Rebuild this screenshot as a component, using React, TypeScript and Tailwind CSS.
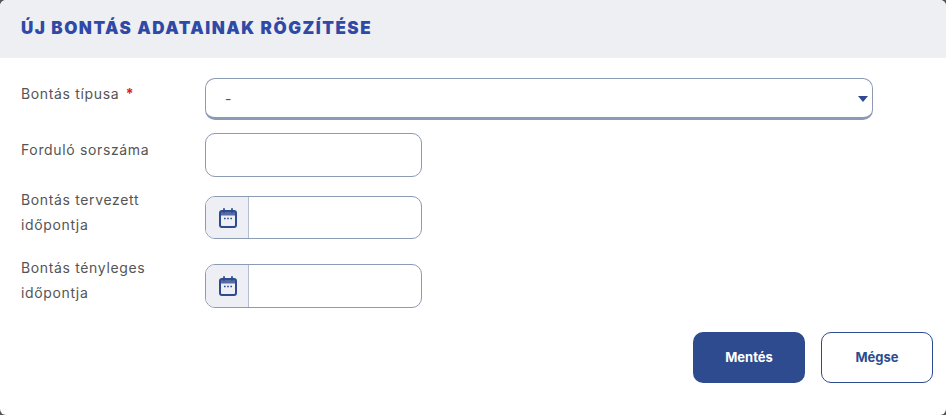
const labelText = "text-[14px] leading-[25px] tracking-[0.65px] text-[#555555]";
const fieldBorder = "border border-[#8c9ab3] bg-white";

function CalendarIcon() {
  return (
    <svg width="18" height="20" viewBox="0 0 18 20" fill="none" className="ml-[1px] text-[#2d4b8e]">
      <rect x="1" y="3" width="16" height="16" rx="2" stroke="currentColor" strokeWidth="2" />
      <rect x="1" y="3" width="16" height="4.5" fill="currentColor" opacity="0.8" />
      <path d="M5 1v3M13 1v3" stroke="currentColor" strokeWidth="1.8" strokeLinecap="round" />
      <path d="M5 10.5h1.6M8.2 10.5h1.6M11.4 10.5H13" stroke="currentColor" strokeWidth="1.6" />
    </svg>
  );
}

function DateField({ lines, className }: { lines: string[]; className: string }) {
  return (
    <div className={`flex items-start ${className}`}>
      <label className={`w-[184px] -mt-[9px] ${labelText}`}>
        {lines[0]}
        <br />
        {lines[1]}
      </label>
      <div className={`flex h-full w-[217px] overflow-hidden rounded-[10px] ${fieldBorder}`}>
        <span className="flex w-[43px] items-center justify-center border-r border-[#b4bdd0] bg-[#eeeff4]">
          <CalendarIcon />
        </span>
        <input className="min-w-0 flex-1 outline-none" />
      </div>
    </div>
  );
}

export default function App() {
  return (
    <div className="h-[415px] w-[946px] bg-[#555]" style={{ fontFamily: "Inter, 'Open Sans', sans-serif" }}>
      <div className="h-full overflow-hidden rounded-[6px] bg-white">
        <div className="flex h-[58px] items-center bg-[#eeeff3] pl-[21px]">
          <h1 className="text-[17px] font-black tracking-[1.5px] text-[#2f49a6]">ÚJ BONTÁS ADATAINAK RÖGZÍTÉSE</h1>
        </div>

        <div className="pl-[21px] pt-[20px]">
          <div className="flex items-start">
            <label className={`w-[184px] pt-[3px] ${labelText}`}>
              Bontás típusa <span className="ml-[2px] font-bold text-[#e02020]">*</span>
            </label>
            <div className={`relative flex h-[42px] w-[668px] items-center rounded-[10px] border-b-[3px] pl-[19px] ${fieldBorder}`}>
              <span className="text-[14px] text-[#555555]">-</span>
              <span className="absolute right-[4px] top-[17px] h-0 w-0 border-x-[5px] border-t-[6px] border-x-transparent border-t-[#2d4b8e]" />
            </div>
          </div>

          <div className="mt-[13px] flex items-start">
            <label className={`w-[184px] pt-[4px] ${labelText}`}>Forduló sorszáma</label>
            <input className={`h-[44px] w-[217px] rounded-[10px] outline-none ${fieldBorder}`} />
          </div>

          <DateField lines={["Bontás tervezett", "időpontja"]} className="mt-[19px] h-[43px]" />
          <DateField lines={["Bontás tényleges", "időpontja"]} className="mt-[25px] h-[44px]" />

          <div className="mt-[24px] flex justify-end gap-[16px] pr-[13px]">
            <button className="h-[51px] w-[112px] rounded-[10px] bg-[#2d4b8e] text-[13px] font-bold text-white">Mentés</button>
            <button className="h-[51px] w-[112px] rounded-[10px] border border-[#2d4b8e] bg-white text-[13px] font-bold text-[#2d4b8e]">Mégse</button>
          </div>
        </div>
      </div>
    </div>
  );
}
